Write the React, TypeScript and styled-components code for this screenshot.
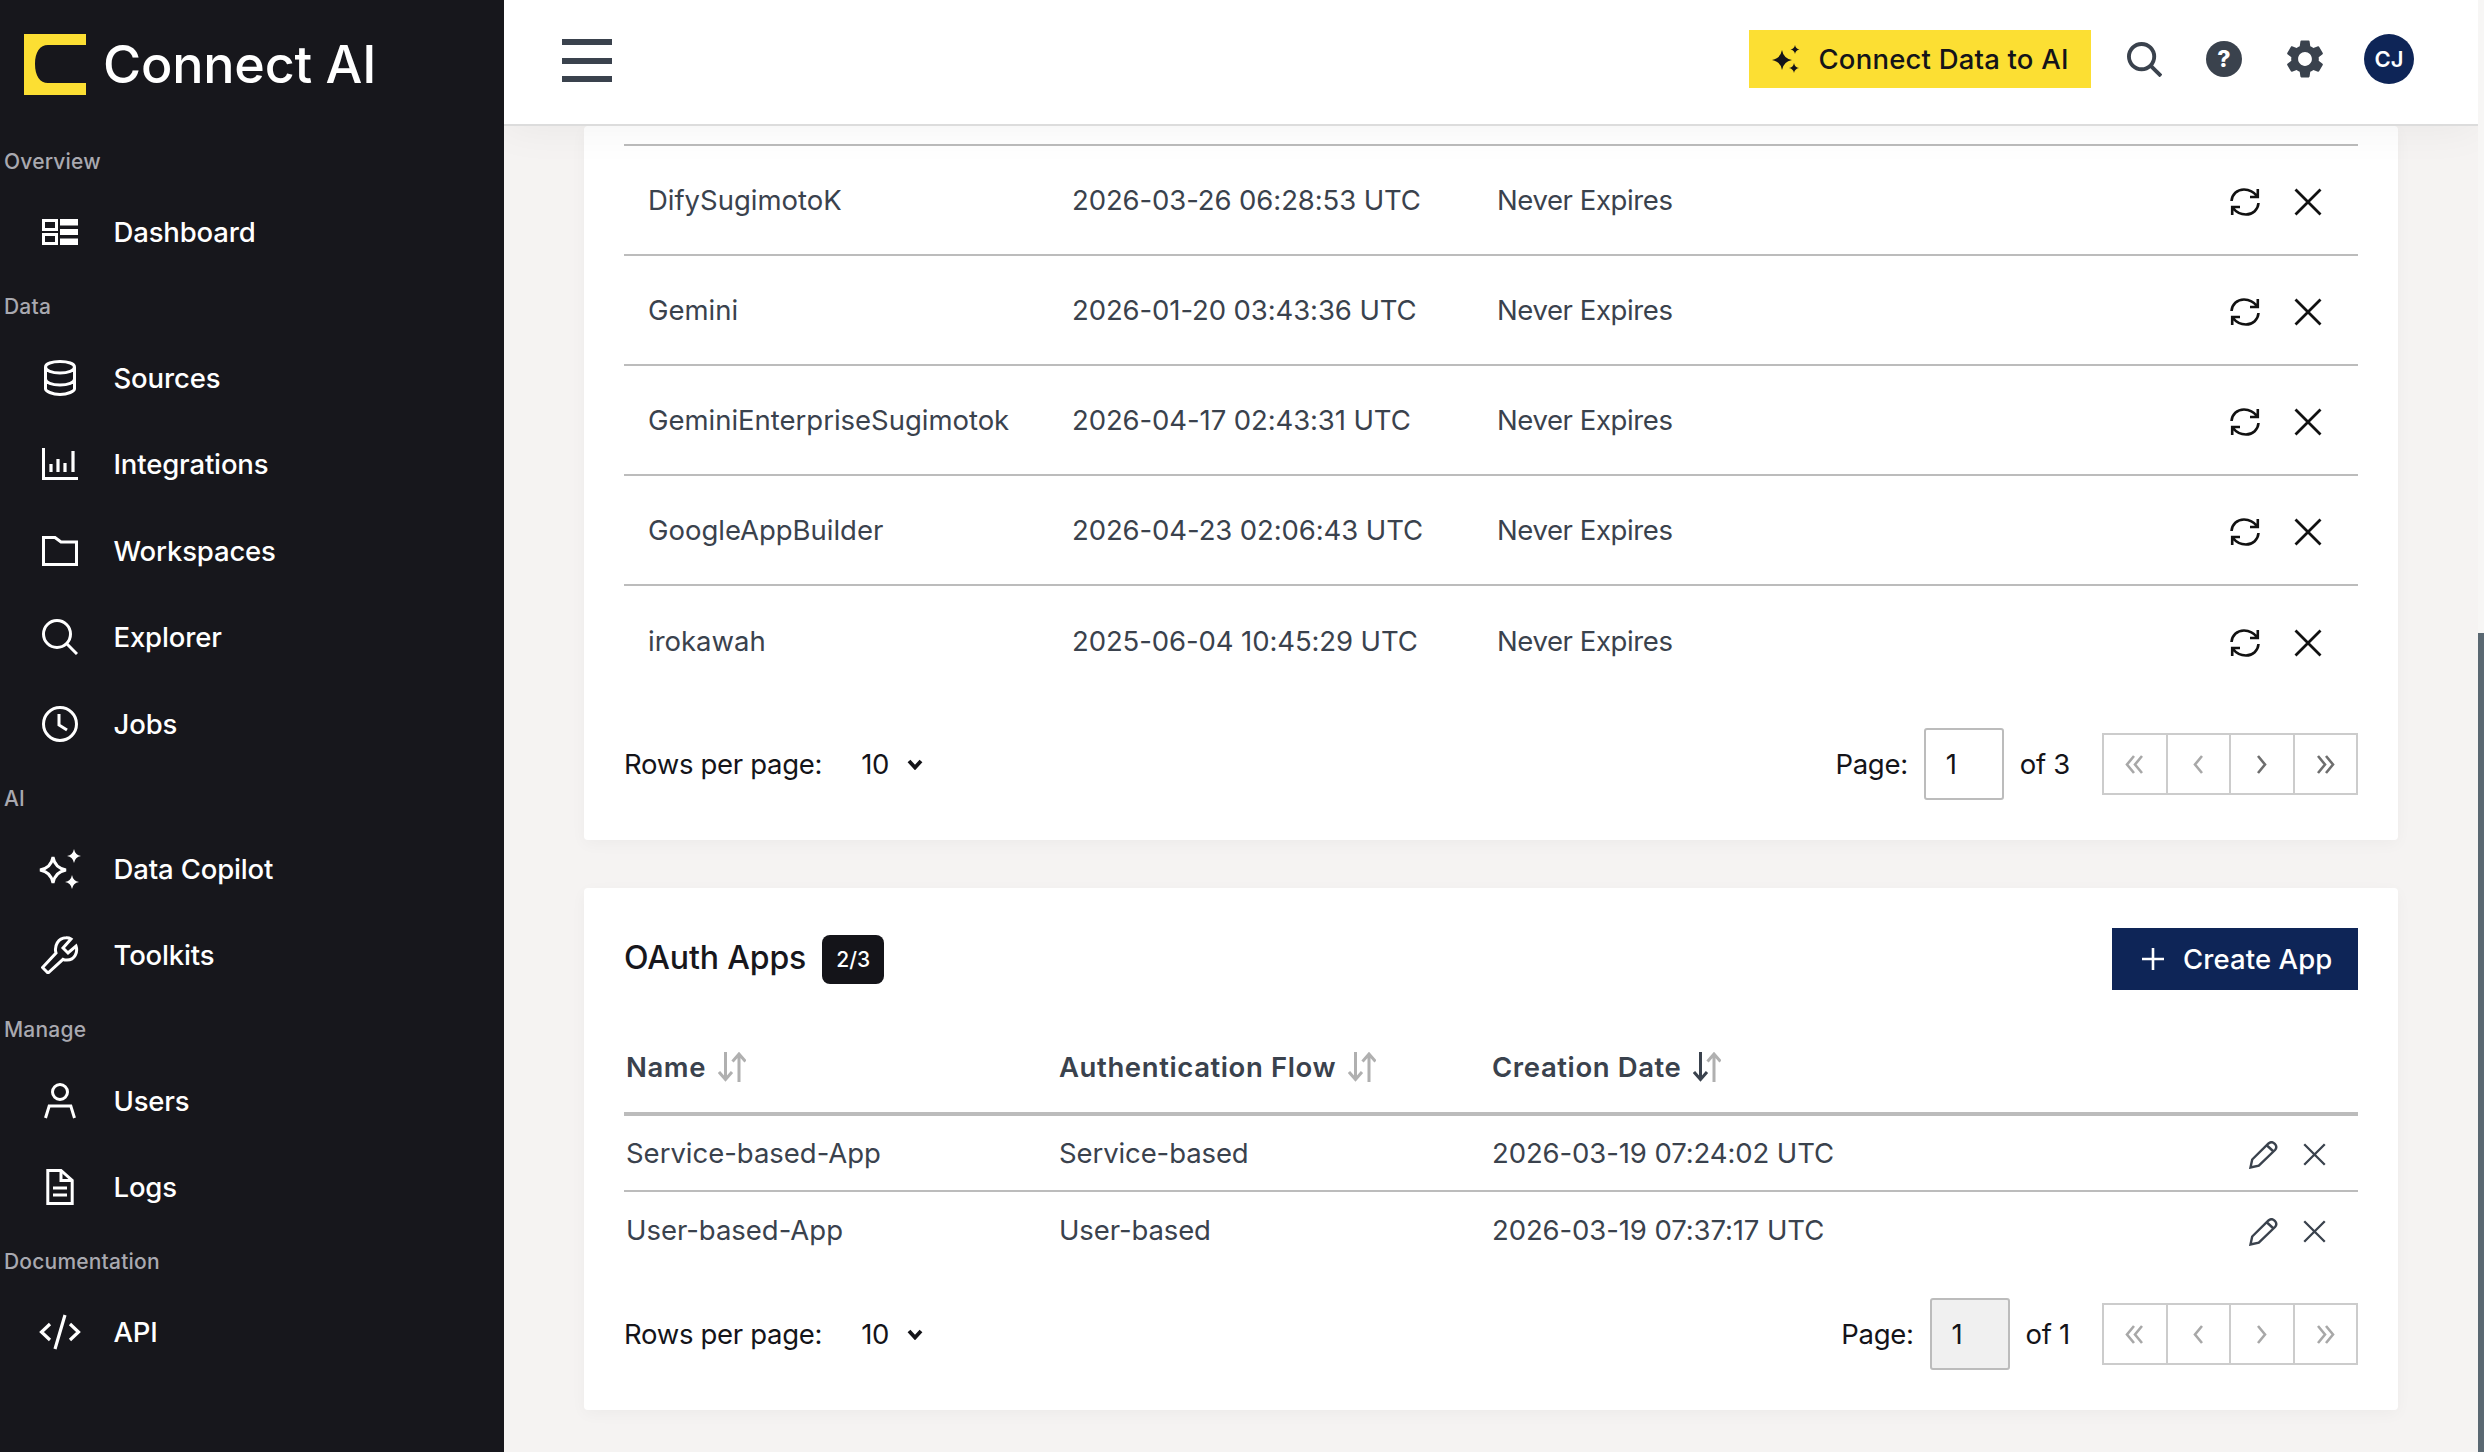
import React from "react";
import styled, { createGlobalStyle } from "styled-components";
import { MdSettings } from "react-icons/md";

const Global = createGlobalStyle`
  html, body { margin: 0; padding: 0; width: 100%; height: 100%; overflow: hidden; background: #f5f3f2; }
  #root { height: 100%; }
  * { box-sizing: border-box; }
  body { font-family: "Inter", "Liberation Sans", sans-serif; }
`;

const Shell = styled.div`
  display: flex;
  height: 1452px;
  width: 2484px;
  overflow: hidden;
`;

const Sidebar = styled.aside`
  flex: 0 0 504px;
  background: #17171c;
  padding-top: 34px;
  display: flex;
  flex-direction: column;
  color: #fff;
`;

const Brand = styled.div`
  display: flex;
  align-items: center;
  gap: 17px;
  height: 61px;
  padding-left: 24px;
  margin-bottom: 40px;
`;

const BrandName = styled.span`
  font-size: 52px;
  font-weight: 500;
  letter-spacing: -0.2px;
  color: #fff;
`;

const Group = styled.section`
  & + & { margin-top: 4.8px; }
`;

const GroupLabel = styled.div`
  height: 54px;
  line-height: 53px;
  padding-left: 4px;
  font-size: 21px;
  font-weight: 500;
  letter-spacing: 0.2px;
  color: #a9a9b0;
`;

const NavItem = styled.a`
  display: flex;
  align-items: center;
  height: 86.5px;
  padding-left: 42px;
  gap: 35.5px;
  font-size: 27.5px;
  font-weight: 500;
  letter-spacing: -0.15px;
  color: #fff;
`;

const NavIcon = styled.span`
  display: flex;
  align-items: center;
  justify-content: center;
  width: 36px;
  height: 40px;
  svg { flex-shrink: 0; display: block; }
`;

const MainColumn = styled.div`
  flex: 1 1 auto;
  min-width: 0;
  display: flex;
  flex-direction: column;
  height: 100%;
  overflow: hidden;
`;

const TopBar = styled.header`
  flex: 0 0 126px;
  background: #fff;
  border-bottom: 2px solid #dcdcdc;
  display: flex;
  align-items: center;
  justify-content: space-between;
  padding: 0 64px 6px 58px;
  position: relative;
  z-index: 2;
  box-shadow: 0 0 46px rgba(0, 0, 0, 0.06);
`;

const Burger = styled.button`
  display: flex;
  flex-direction: column;
  gap: 12.5px;
  width: 50px;
  padding: 0;
  margin-top: 3px;
  border: 0;
  background: none;
  span { display: block; height: 6px; background: #3a424d; }
`;

const TopActions = styled.div`
  display: flex;
  align-items: center;
`;

const ConnectButton = styled.button`
  display: flex;
  align-items: center;
  gap: 19px;
  width: 342px;
  height: 58px;
  padding: 0 0 0 23px;
  border: 0;
  background: #fcdf33;
  color: #141419;
  font-family: inherit;
  font-size: 27.5px;
  font-weight: 500;
  letter-spacing: 0.2px;
`;

const TopIcon = styled.span<{ $gap: number }>`
  display: flex;
  align-items: center;
  justify-content: center;
  width: 50px;
  height: 50px;
  margin-left: ${(p) => p.$gap}px;
  color: #3a424d;
`;

const HelpDot = styled.span`
  display: flex;
  align-items: center;
  justify-content: center;
  width: 36px;
  height: 36px;
  border-radius: 50%;
  background: #3a424d;
  color: #fff;
  font-size: 23px;
  font-weight: 800;
  line-height: 1;
`;

const Avatar = styled.span`
  display: flex;
  align-items: center;
  justify-content: center;
  width: 50px;
  height: 50px;
  margin-left: 34px;
  border-radius: 50%;
  background: #0e2557;
  color: #fff;
  font-size: 22px;
  font-weight: 600;
`;

const Content = styled.main`
  flex: 1 1 auto;
  padding: 0 80px;
  display: flex;
  flex-direction: column;
  gap: 48px;
`;

const Card = styled.section<{ $top: number }>`
  background: #fff;
  border-radius: 4px;
  padding: ${(p) => p.$top}px 40px 40px;
  box-shadow: 0 4px 16px rgba(0, 0, 0, 0.035);
`;

const Table = styled.div<{ $ruled?: boolean }>`
  border-top: ${(p) => (p.$ruled ? "2px solid #bcbcbc" : "0")};
`;

const Row = styled.div<{ $h: number; $cols: string; $pad: number }>`
  display: grid;
  grid-template-columns: ${(p) => p.$cols};
  align-items: center;
  height: ${(p) => p.$h}px;
  padding-left: ${(p) => p.$pad}px;
  font-size: 27.5px;
  letter-spacing: -0.1px;
  color: #3a424d;
  border-bottom: 2px solid #bcbcbc;
  &:last-child { border-bottom: 0; }
`;

const NameCell = styled.div`
  letter-spacing: -0.02px;
`;

const ExpiryCell = styled.div`
  letter-spacing: -0.4px;
`;

const HeadRow = styled(Row)`
  border-bottom: 4px solid #bcbcbc !important;
  font-weight: 600;
  letter-spacing: 0.6px;
  margin-top: 32px;
`;

const HeadCell = styled.div`
  display: flex;
  align-items: center;
  gap: 12px;
`;

const RowActions = styled.div<{ $gap: number; $pr: number }>`
  display: flex;
  align-items: center;
  justify-content: flex-end;
  gap: ${(p) => p.$gap}px;
  padding-right: ${(p) => p.$pr}px;
  padding-top: 3px;
`;

const PagerBar = styled.div<{ $top: number }>`
  display: flex;
  align-items: center;
  justify-content: space-between;
  margin-top: ${(p) => p.$top}px;
  font-size: 27.5px;
  letter-spacing: -0.3px;
  color: #141419;
`;

const RowsPer = styled.div`
  display: flex;
  align-items: center;
`;

const RowsCount = styled.span`
  margin-left: 39px;
  margin-right: 18px;
`;

const PageControls = styled.div`
  display: flex;
  align-items: center;
`;

const PageInput = styled.span<{ $off?: boolean }>`
  display: flex;
  align-items: center;
  width: 80px;
  height: 72px;
  margin: 0 16px;
  padding-left: 20px;
  border: 2px solid #bcbcbc;
  border-radius: 3px;
  background: ${(p) => (p.$off ? "#f0f0f0" : "#fff")};
`;

const Pager = styled.div`
  display: flex;
  width: 256px;
  height: 62px;
  margin-left: 32px;
  border: 2px solid #cccccc;
`;

const PagerCell = styled.span`
  display: flex;
  flex: 1 1 0;
  align-items: center;
  justify-content: center;
  & + & { border-left: 2px solid #cccccc; }
`;

const TitleRow = styled.div`
  display: flex;
  align-items: center;
  justify-content: space-between;
  height: 62px;
`;

const TitleGroup = styled.div`
  display: flex;
  align-items: center;
  gap: 16px;
`;

const Title = styled.h2`
  margin: 0 0 4px;
  font-size: 32px;
  font-weight: 500;
  letter-spacing: -0.13px;
  color: #17171c;
`;

const Badge = styled.span`
  display: flex;
  align-items: center;
  justify-content: center;
  width: 62px;
  height: 49px;
  border-radius: 8px;
  background: #141419;
  color: #fff;
  font-size: 21px;
  font-weight: 500;
`;

const CreateButton = styled.button`
  display: flex;
  align-items: center;
  gap: 19px;
  width: 246px;
  height: 62px;
  padding: 0 0 0 30px;
  border: 0;
  background: #0e2557;
  color: #fff;
  font-family: inherit;
  font-size: 27.5px;
  font-weight: 500;
  letter-spacing: 0.1px;
`;

const ScrollTrack = styled.div`
  flex: 0 0 6px;
  height: 100%;
  background: #f7f6f5;
  padding-top: 633px;
`;

const ScrollThumb = styled.div`
  height: 100%;
  background: #5a6872;
`;

const star = (cx: number, cy: number, r: number) =>
  `M${cx} ${cy - r}Q${cx + r * 0.15} ${cy - r * 0.15} ${cx + r} ${cy}Q${cx + r * 0.15} ${cy + r * 0.15} ${cx} ${cy + r}Q${cx - r * 0.15} ${cy + r * 0.15} ${cx - r} ${cy}Q${cx - r * 0.15} ${cy - r * 0.15} ${cx} ${cy - r}Z`;

const line = { fill: "none", stroke: "currentColor", strokeWidth: 2.6 } as const;

const Logo = () => (
  <svg width="62" height="61" viewBox="0 0 62 61">
    <path
      fill="#fcdf33"
      fillRule="evenodd"
      d="M0 0H62V61H0ZM62 11H24C16 11 11 18 11 30C11 42 16 49 24 49H62Z"
    />
  </svg>
);

const IconDashboard = () => (
  <svg width="36" height="26" viewBox="0 0 36 26">
    <g {...line} strokeWidth={3}>
      <rect x="1.5" y="1.5" width="13" height="9" />
      <rect x="1.5" y="15.5" width="13" height="9" />
    </g>
    <path fill="currentColor" d="M18 0H36V6.5H18ZM18 10H36V16H18ZM18 19.5H36V26H18Z" />
  </svg>
);
const IconDatabase = () => (
  <svg width="32" height="36" viewBox="0 0 32 36">
    <path
      {...line}
      strokeWidth={3}
      d="M1.5 7C1.5 3.6 8 1.5 16 1.5S30.5 3.6 30.5 7V29C30.5 31 24 34.5 16 34.5S1.5 31 1.5 29ZM1.5 7C1.5 10.5 8 13 16 13S30.5 10.5 30.5 7M1.5 19C1.5 22.5 8 25 16 25S30.5 22.5 30.5 19"
    />
  </svg>
);
const IconChart = () => (
  <svg width="36" height="32" viewBox="0 0 36 32">
    <path {...line} strokeWidth={3} d="M1.5 0V30.5H36" />
    <path {...line} d="M9 16V24M16 11V24M23 15V24M31 3V24" strokeWidth={3.2} />
  </svg>
);
const IconFolder = () => (
  <svg width="36" height="30" viewBox="0 0 36 30">
    <path {...line} strokeWidth={3} d="M1.5 1.5H13L19 6H34.5V28.5H1.5Z" />
  </svg>
);
const IconSearch = ({ size = 36, sw = 3 }: { size?: number; sw?: number }) => (
  <svg width={size} height={size} viewBox="0 0 36 36">
    <circle {...line} strokeWidth={sw} cx="15" cy="15" r={15 - sw / 2} />
    <path {...line} strokeWidth={sw} d="M24.5 24.5L35 35" />
  </svg>
);
const IconClock = () => (
  <svg width="36" height="36" viewBox="0 0 36 36">
    <circle {...line} strokeWidth={3} cx="18" cy="18" r="16.5" />
    <path {...line} strokeWidth={3} d="M17 8V19L25 24" />
  </svg>
);
const IconCopilot = () => (
  <svg width="42" height="42" viewBox="0 0 42 42">
    <path {...line} strokeWidth={3} d={star(14, 22, 13)} />
    <path fill="currentColor" d={star(35, 8, 7)} />
    <path fill="currentColor" d={star(33, 34, 7)} />
  </svg>
);
const IconWrench = () => (
  <svg width="38" height="38" viewBox="0 0 38 38">
    <path
      {...line}
      strokeWidth={3}
      d="M22 12L27 17L35 10C37 16 34 24 26 24C24.5 24 23 23.8 22 23.3L7 37L1.5 31.5L15 17C13 10 17 2 25 1.8C27 1.7 28.5 2 30 3Z"
    />
  </svg>
);
const IconUser = () => (
  <svg width="32" height="36" viewBox="0 0 32 36">
    <circle {...line} strokeWidth={3} cx="16" cy="9" r="7.5" />
    <path {...line} strokeWidth={3} d="M1.5 35L5.2 23H26.8L30.5 35" />
  </svg>
);
const IconDoc = () => (
  <svg width="28" height="36" viewBox="0 0 28 36">
    <path {...line} d="M1.8 1.5H15L26.2 11.5V34.5H1.8Z" strokeWidth={3} />
    <path {...line} d="M15 1.5V11.5H26M7 19H21M7 26H21" strokeWidth={3} />
  </svg>
);
const IconCode = () => (
  <svg width="42" height="36" viewBox="0 0 42 36">
    <path {...line} strokeWidth={3.2} d="M11 10L2.5 18L11 26M31 10L39.5 18L31 26M26 1L16 35" />
  </svg>
);

const IconSpark = () => (
  <svg width="28" height="28" viewBox="0 0 28 28">
    <path fill="#141419" d={star(10, 15, 10)} />
    <path fill="#141419" d={star(23, 4.5, 4.5)} />
    <path fill="#141419" d={star(22, 23, 5)} />
  </svg>
);

const IconRefresh = () => (
  <svg width="30" height="28" viewBox="0 0 30 28">
    <path
      fill="none"
      stroke="#111"
      strokeWidth="2.6"
      d="M1.5 13C2 6.5 7 1.5 14 1.5C20 1.5 24 4 27.5 8.5M27.8 1V9H20M28.5 15C28 21.5 23 26.5 16 26.5C10 26.5 6 24 2.5 19.5M2.2 27V19H10"
    />
  </svg>
);

const IconClose = ({ size, color, sw }: { size: number; color: string; sw: number }) => (
  <svg width={size} height={size} viewBox="0 0 28 28">
    <path fill="none" stroke={color} strokeWidth={sw} d="M1.5 1.5L26.5 26.5M26.5 1.5L1.5 26.5" />
  </svg>
);

const IconPencil = () => (
  <svg width="29" height="28" viewBox="0 0 29 28">
    <path
      fill="none"
      stroke="#3a424d"
      strokeWidth="2.4"
      d="M1.5 26.5L3.2 18.5L19.5 2.5C21.5 0.8 24 1 25.8 2.8C27.6 4.6 27.8 6.8 26 9L9.8 24.6ZM18 4.5L24.5 10.5"
    />
  </svg>
);

const Chevron = ({ kind, color }: { kind: "first" | "prev" | "next" | "last"; color: string }) => {
  const d = {
    first: "M9 1L2 9.5L9 18M17 1L10 9.5L17 18",
    prev: "M13 1L6 9.5L13 18",
    next: "M6 1L13 9.5L6 18",
    last: "M2 1L9 9.5L2 18M10 1L17 9.5L10 18",
  }[kind];
  return (
    <svg width="19" height="19" viewBox="0 0 19 19">
      <path fill="none" stroke={color} strokeWidth="2.6" d={d} />
    </svg>
  );
};

const SmallChevron = () => (
  <svg width="16" height="11" viewBox="0 0 16 11">
    <path fill="none" stroke="#141419" strokeWidth="3.8" d="M2 2L8 8.5L14 2" />
  </svg>
);

const SortIcon = ({ active }: { active?: boolean }) => (
  <svg width="28" height="30" viewBox="0 0 28 30">
    <path
      fill="none"
      stroke={active ? "#3a424d" : "#b0b0b0"}
      strokeWidth="3"
      d="M7.5 0V27M1 20L7.5 27.5L14 20"
    />
    <path fill="none" stroke="#b0b0b0" strokeWidth="3" d="M21 30V2M14.5 9.5L21 2L27.5 9.5" />
  </svg>
);

const nav = [
  { label: "Overview", items: [["Dashboard", <IconDashboard />]] },
  {
    label: "Data",
    items: [
      ["Sources", <IconDatabase />],
      ["Integrations", <IconChart />],
      ["Workspaces", <IconFolder />],
      ["Explorer", <IconSearch />],
      ["Jobs", <IconClock />],
    ],
  },
  {
    label: "AI",
    items: [
      ["Data Copilot", <IconCopilot />],
      ["Toolkits", <IconWrench />],
    ],
  },
  {
    label: "Manage",
    items: [
      ["Users", <IconUser />],
      ["Logs", <IconDoc />],
    ],
  },
  { label: "Documentation", items: [["API", <IconCode />]] },
] as const;

const tokens = [
  ["DifySugimotoK", "2026-03-26 06:28:53 UTC"],
  ["Gemini", "2026-01-20 03:43:36 UTC"],
  ["GeminiEnterpriseSugimotok", "2026-04-17 02:43:31 UTC"],
  ["GoogleAppBuilder", "2026-04-23 02:06:43 UTC"],
  ["irokawah", "2025-06-04 10:45:29 UTC"],
];

const apps = [
  ["Service-based-App", "Service-based", "2026-03-19 07:24:02 UTC"],
  ["User-based-App", "User-based", "2026-03-19 07:37:17 UTC"],
];

const PageBar = ({
  top,
  total,
  off,
  colors,
}: {
  top: number;
  total: number;
  off?: boolean;
  colors: [string, string];
}) => (
  <PagerBar $top={top}>
    <RowsPer>
      Rows per page:
      <RowsCount>10</RowsCount>
      <SmallChevron />
    </RowsPer>
    <PageControls>
      Page:
      <PageInput $off={off}>1</PageInput>
      of {total}
      <Pager>
        <PagerCell><Chevron kind="first" color={colors[0]} /></PagerCell>
        <PagerCell><Chevron kind="prev" color={colors[0]} /></PagerCell>
        <PagerCell><Chevron kind="next" color={colors[1]} /></PagerCell>
        <PagerCell><Chevron kind="last" color={colors[1]} /></PagerCell>
      </Pager>
    </PageControls>
  </PagerBar>
);

const TOKEN_COLS = "424px 425px 1fr auto";
const APP_COLS = "433px 433px 1fr auto";

export default function App() {
  return (
    <Shell>
      <Global />
      <Sidebar>
        <Brand>
          <Logo />
          <BrandName>Connect AI</BrandName>
        </Brand>
        {nav.map((g) => (
          <Group key={g.label}>
            <GroupLabel>{g.label}</GroupLabel>
            {g.items.map(([name, icon]) => (
              <NavItem key={name as string}>
                <NavIcon>{icon}</NavIcon>
                {name}
              </NavItem>
            ))}
          </Group>
        ))}
      </Sidebar>
      <MainColumn>
        <TopBar>
          <Burger aria-label="Menu">
            <span />
            <span />
            <span />
          </Burger>
          <TopActions>
            <ConnectButton>
              <IconSpark />
              Connect Data to AI
            </ConnectButton>
            <TopIcon $gap={29}><IconSearch size={35} sw={4} /></TopIcon>
            <TopIcon $gap={29.5}><HelpDot>?</HelpDot></TopIcon>
            <TopIcon $gap={31}><MdSettings size={46} /></TopIcon>
            <Avatar>CJ</Avatar>
          </TopActions>
        </TopBar>
        <Content>
          <Card $top={18}>
            <Table $ruled>
              {tokens.map(([name, date]) => (
                <Row key={name} $h={110} $cols={TOKEN_COLS} $pad={24}>
                  <NameCell>{name}</NameCell>
                  <div>{date}</div>
                  <ExpiryCell>Never Expires</ExpiryCell>
                  <RowActions $gap={34} $pr={36}>
                    <IconRefresh />
                    <IconClose size={28} color="#111" sw={2.8} />
                  </RowActions>
                </Row>
              ))}
            </Table>
            <PageBar top={32} total={3} colors={["#a8a8a8", "#6e6e6e"]} />
          </Card>
          <Card $top={40}>
            <TitleRow>
              <TitleGroup>
                <Title>OAuth Apps</Title>
                <Badge>2/3</Badge>
              </TitleGroup>
              <CreateButton>
                <svg width="22" height="22" viewBox="0 0 22 22">
                  <path fill="none" stroke="#fff" strokeWidth="2.6" d="M11 0V22M0 11H22" />
                </svg>
                Create App
              </CreateButton>
            </TitleRow>
            <Table>
              <HeadRow $h={94} $cols={APP_COLS} $pad={2}>
                <HeadCell>Name <SortIcon /></HeadCell>
                <HeadCell>Authentication Flow <SortIcon /></HeadCell>
                <HeadCell>Creation Date <SortIcon active /></HeadCell>
                <div />
              </HeadRow>
              {apps.map(([name, flow, date]) => (
                <Row key={name} $h={76} $cols={APP_COLS} $pad={2}>
                  <NameCell>{name}</NameCell>
                  <div>{flow}</div>
                  <div>{date}</div>
                  <RowActions $gap={25} $pr={32}>
                    <IconPencil />
                    <IconClose size={23} color="#3a424d" sw={2.8} />
                  </RowActions>
                </Row>
              ))}
            </Table>
            <PageBar top={30} total={1} off colors={["#a8a8a8", "#a8a8a8"]} />
          </Card>
        </Content>
      </MainColumn>
      <ScrollTrack>
        <ScrollThumb />
      </ScrollTrack>
    </Shell>
  );
}
